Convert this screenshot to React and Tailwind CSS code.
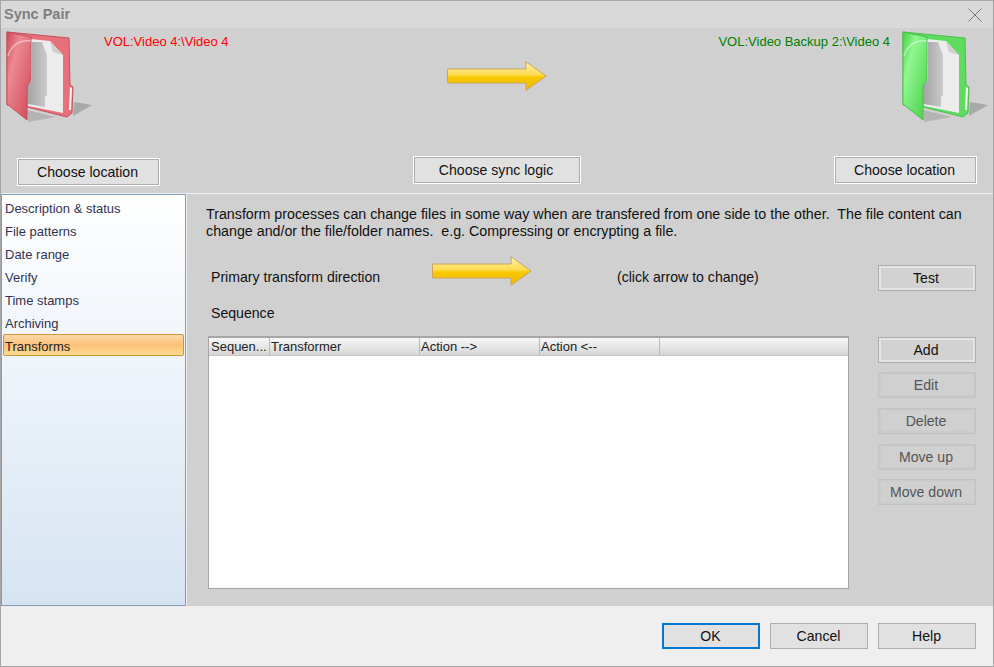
import React from 'react';

const navItems = ['Description & status', 'File patterns', 'Date range', 'Verify', 'Time stamps', 'Archiving', 'Transforms'];

const Folder = ({ id, back, edge, flapTop, flapBottom }) => (
  <svg width="90" height="95" viewBox="0 0 90 95" className="block shrink-0">
    <defs>
      <linearGradient id={`${id}-flap`} x1="0" y1="0" x2="1" y2="1">
        <stop offset="0" stopColor={flapBottom} />
        <stop offset="0.3" stopColor={flapTop} />
        <stop offset="1" stopColor={flapBottom} />
      </linearGradient>
      <linearGradient id={`${id}-shade`} x1="0" y1="0" x2="1" y2="0">
        <stop offset="0" stopColor="#a4a4a4" />
        <stop offset="1" stopColor="#cbcbcb" />
      </linearGradient>
    </defs>
    {/* shadow */}
    <polygon points="68,72 86,75 67,86" fill="#a9a9a9" />
    <polygon points="21,80 50,87 22,92" fill="#b4b4b4" />
    {/* back */}
    <polygon points="1,2 63,8 64,55 67,57 66,83 61,87 21,77 1,75" fill={back} stroke={edge} strokeWidth="1" />
    {/* paper */}
    <polygon points="25,9 44,11 57,25 57,83 22,76 22,55 25,50" fill="#ececec" />
    <polygon points="26,12 36,12 41,25 41,65 39,67 39,77 22,74 22,55 26,50" fill={`url(#${id}-shade)`} />
    <polygon points="44,11 57,25 47,22" fill="#cfcfcf" />
    <polygon points="64,57 66,58 65,80 63,80" fill="#f4f4f4" />
    {/* flap */}
    <polygon points="1,2 25,7 25,50 21,56 21,90 1,74" fill={`url(#${id}-flap)`} stroke={edge} strokeWidth="1" />
    <path d="M2 26 C6 14 14 10 25 11" fill="none" stroke="#ffffff" strokeOpacity="0.45" strokeWidth="1.5" />
  </svg>
);

const Arrow = ({ id, className = '' }) => (
  <svg width="100" height="30" viewBox="0 0 100 30" className={`block shrink-0 ${className}`}>
    <defs>
      <linearGradient id={id} x1="0" y1="0" x2="0" y2="1">
        <stop offset="0" stopColor="#fff3b0" />
        <stop offset="0.45" stopColor="#ffdc50" />
        <stop offset="0.55" stopColor="#f8c800" />
        <stop offset="1" stopColor="#f0b800" />
      </linearGradient>
    </defs>
    <polygon
      points="0.5,8 79,8 79,0.7 99,15 79,29.3 79,22 0.5,22"
      fill={`url(#${id})`}
      stroke="#c9a45c"
      strokeWidth="1"
    />
  </svg>
);

// raised panel button used on the grey areas
const RaisedButton = ({ children, className = '' }) => (
  <div className={`flex items-center justify-center border border-white bg-[#e1e1e1] text-[#111] ${className}`}>
    <div className="flex h-full w-full items-center justify-center border border-[#adadad] pr-[2px] pt-[2px]">{children}</div>
  </div>
);

const SideButton = ({ children, disabled, className = '' }) => (
  <div className={`h-[26px] w-[98px] shrink-0 border ${disabled ? 'border-[#c2c2c2] text-[#555]' : 'border-[#adadad] text-[#111]'} ${className}`}>
    <div className={`flex h-full w-full items-center justify-center border-2 pr-[2px] pt-[2px] ${disabled ? 'border-[#cbcbcb] bg-[#d0d0d0]' : 'border-[#e4e4e4] bg-[#d2d2d2]'}`}>
      {children}
    </div>
  </div>
);

const FooterButton = ({ children, active }) => (
  <div className={`flex h-[26px] w-[98px] items-center justify-center bg-[#e1e1e1] pr-px pt-[2px] text-[#111] ${active ? 'border-2 border-[#0078d7]' : 'border border-[#adadad]'}`}>
    {children}
  </div>
);

const App = () => {
  return (
    <div className="flex h-[667px] w-[994px] flex-col overflow-hidden border border-[#a6a6a6] bg-[#efefef] font-['Liberation_Sans',Arial,sans-serif] text-[14.1px] text-[#111]">
      {/* title bar */}
      <div className="flex h-[27px] shrink-0 items-center justify-between bg-[#d9d9d9] pl-[3px] pr-[11px]">
        <span className="text-[14.5px] font-bold text-[#7f7f7f]">Sync Pair</span>
        <svg width="14" height="14" viewBox="0 0 14 14">
          <path d="M0.5 0.5 L13.5 13.5 M13.5 0.5 L0.5 13.5" stroke="#777" strokeWidth="1" fill="none" />
        </svg>
      </div>

      {/* locations */}
      <div className="flex h-[166px] shrink-0 justify-between border-b border-[#f0f0f0] bg-[#d0d0d0]">
        <div className="flex w-[300px] flex-col">
          <div className="flex h-[130px] items-start pl-[5px] pt-[2px]">
            <Folder id="red" back="#e8707a" edge="#c4505c" flapTop="#ec8a92" flapBottom="#cf4656" />
            <span className="ml-[8px] mt-[2px] text-[13px] text-[#ff0000]">VOL:Video 4:\Video 4</span>
          </div>
          <RaisedButton className="ml-[16px] h-[28px] w-[143px]">Choose location</RaisedButton>
        </div>

        <div className="flex flex-col items-center pt-[33px]">
          <Arrow id="arrow-top" />
          <RaisedButton className="mt-[65px] h-[28px] w-[168px]">Choose sync logic</RaisedButton>
        </div>

        <div className="flex w-[300px] flex-col items-end pr-[16px]">
          <div className="-mr-[15px] flex h-[128px] items-start pt-[2px]">
            <span className="mr-[12px] mt-[2px] text-[13px] text-[#008000]">VOL:Video Backup 2:\Video 4</span>
            <Folder id="green" back="#5fdc5f" edge="#4cc04c" flapTop="#90f890" flapBottom="#48cc48" />
          </div>
          <RaisedButton className="h-[28px] w-[143px]">Choose location</RaisedButton>
        </div>
      </div>

      {/* body */}
      <div className="flex h-[412px] shrink-0 gap-[1px]">
        <div className="flex h-full w-[186px] flex-col gap-[1px] border border-[#7f9db9] bg-gradient-to-b from-white to-[#d6e4f2] pl-[1px] pr-[1px] pt-[1px] text-[13px]">
          {navItems.map((item) => (
            <div
              key={item}
              className={
                item === 'Transforms'
                  ? 'flex h-[22px] items-center rounded-[2px] border border-[#c8963c] bg-gradient-to-b from-[#fcd8a8] via-[#fbc078] to-[#ffdc90] pl-[1px] pt-[4px] text-[#222]'
                  : 'flex h-[22px] items-center pl-[2px] pt-[4px] text-[#333355]'
              }
            >
              {item}
            </div>
          ))}
        </div>

        <div className="flex flex-1 flex-col bg-[#d0d0d0] pl-[19px] pr-[17px] pt-[12px]">
          <p className="w-[770px] text-[14.25px] leading-[17px]">
            Transform processes can change files in some way when are transfered from one side to the other.&nbsp; The file content can change and/or the file/folder names.&nbsp; e.g. Compressing or encrypting a file.
          </p>

          <div className="mt-[17px] flex h-[40px] items-center pl-[5px]">
            <span className="w-[221px] pt-[2px]">Primary transform direction</span>
            <Arrow id="arrow-row" className="mb-[12px]" />
            <span className="ml-[85px] w-[261px] pt-[2px]">(click arrow to change)</span>
            <SideButton className="mt-[2px]">Test</SideButton>
          </div>

          <div className="flex h-[32px] items-center pl-[5px] pt-[2px]">Sequence</div>

          <div className="mt-[7px] flex gap-[29px] pl-[2px]">
            <div className="flex h-[253px] w-[641px] flex-col border border-t-2 border-[#a6a6a6] bg-white">
              <div className="flex h-[18px] shrink-0 border-b border-[#c8c8c8] bg-gradient-to-b from-[#f8f8f8] to-[#d6d6d6] text-[13px] leading-[17px] text-[#222]">
                <div className="w-[61px] border-r border-[#b8b8b8] pl-[2px]">Sequen...</div>
                <div className="w-[150px] border-r border-[#b8b8b8] pl-[1px]">Transformer</div>
                <div className="w-[120px] border-r border-[#b8b8b8] pl-[1px]">Action --&gt;</div>
                <div className="w-[120px] border-r border-[#b8b8b8] pl-[1px]">Action &lt;--</div>
              </div>
            </div>

            <div className="flex flex-col pt-px">
              <SideButton>Add</SideButton>
              <SideButton disabled className="mt-[9px]">Edit</SideButton>
              <SideButton disabled className="mt-[10px]">Delete</SideButton>
              <SideButton disabled className="mt-[10px]">Move up</SideButton>
              <SideButton disabled className="mt-[9px]">Move down</SideButton>
            </div>
          </div>
        </div>
      </div>

      {/* footer */}
      <div className="flex flex-1 items-start justify-end gap-[10px] pr-[17px] pt-[17px]">
        <FooterButton active>OK</FooterButton>
        <FooterButton>Cancel</FooterButton>
        <FooterButton>Help</FooterButton>
      </div>
    </div>
  );
};

export default App;
